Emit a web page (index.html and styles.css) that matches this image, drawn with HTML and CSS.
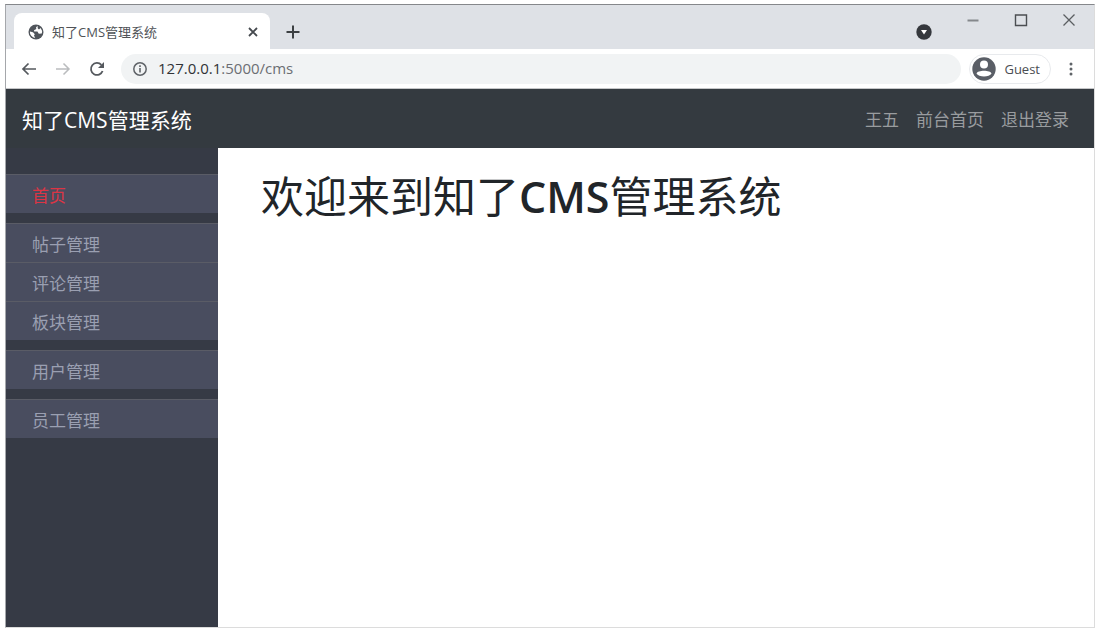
FILE: index.html
```html
<!DOCTYPE html>
<html lang="zh-CN">
<head>
<meta charset="utf-8">
<meta name="viewport" content="width=device-width, initial-scale=1">
<title>知了CMS管理系统</title>
<link rel="stylesheet" href="styles.css">
</head>
<body>
<div class="window">
  <div class="tabstrip">
    <div class="tab">
      <svg class="globe" viewBox="0 0 16 16" width="16" height="16" aria-hidden="true">
        <circle cx="8" cy="8" r="7.500" fill="#50555b"/>
        <path d="M9.500 1.800 8 3.400 8.300 5 6 6.200 6.200 7.600 9.400 7.600 10.800 9.800 13.800 9.600A6 6 0 0 0 12.600 4L11 5.600 9.800 4.600Z" fill="#fff"/>
        <path d="M1.900 7.400 5 8.200 6.800 10.200 6 11.400 7.200 13.900A6 6 0 0 1 1.900 7.400Z" fill="#fff"/>
      </svg>
      <span class="tab-title">知了CMS管理系统</span>
      <button class="icon-button" type="button" aria-label="关闭标签页">
        <svg viewBox="0 0 10 10" width="10" height="10"><path d="M1 1l8 8M9 1L1 9" stroke="#45494e" stroke-width="1.800"/></svg>
      </button>
    </div>
    <button class="icon-button new-tab" type="button" aria-label="新标签页">
      <svg viewBox="0 0 14 14" width="14" height="14"><path d="M7 0.500v13M0.500 7h13" stroke="#3c4043" stroke-width="2"/></svg>
    </button>
    <div class="window-controls">
      <button class="icon-button tab-search" type="button" aria-label="搜索标签页">
        <svg viewBox="0 0 16 16" width="16" height="16"><circle cx="8" cy="8" r="7.700" fill="#35383d"/><path d="M5 6h6l-3 4.500z" fill="#fff"/></svg>
      </button>
      <button class="icon-button" type="button" aria-label="最小化">
        <svg viewBox="0 0 14 14" width="14" height="14"><path d="M1.500 7.500h11" stroke="#85888c" stroke-width="2"/></svg>
      </button>
      <button class="icon-button" type="button" aria-label="最大化">
        <svg viewBox="0 0 14 14" width="14" height="14"><path d="M1.500 2h11v10.500h-11z" fill="none" stroke="#4b4e52" stroke-width="1.400"/></svg>
      </button>
      <button class="icon-button" type="button" aria-label="关闭">
        <svg viewBox="0 0 14 14" width="14" height="14"><path d="M1.500 1.500l11 11M12.500 1.500l-11 11" stroke="#5b5e62" stroke-width="1.300"/></svg>
      </button>
    </div>
  </div>

  <div class="toolbar">
    <button class="icon-button" type="button" aria-label="后退">
      <svg viewBox="0 0 16 16" width="16" height="16"><path d="M15 8H2M7.500 2.500 2 8l5.500 5.500" fill="none" stroke="#55595e" stroke-width="1.700"/></svg>
    </button>
    <button class="icon-button" type="button" aria-label="前进">
      <svg viewBox="0 0 16 16" width="16" height="16"><path d="M1 8h13M8.500 2.500 14 8l-5.500 5.500" fill="none" stroke="#babcbe" stroke-width="1.500"/></svg>
    </button>
    <button class="icon-button" type="button" aria-label="刷新">
      <svg viewBox="0 0 16 16" width="16" height="16"><path d="M13.600 10A6 6 0 1 1 12.400 3.900" fill="none" stroke="#55595e" stroke-width="1.800"/><path d="M15 1v6H9z" fill="#55595e"/></svg>
    </button>
    <div class="address">
      <svg viewBox="0 0 14 14" width="14" height="14" aria-hidden="true"><circle cx="7" cy="7" r="6.200" fill="none" stroke="#5f6368" stroke-width="1.500"/><path d="M7 6v4.500M7 3.300v1.600" stroke="#5f6368" stroke-width="1.600"/></svg>
      <span class="url"><span class="host">127.0.0.1</span>:5000/cms</span>
    </div>
    <button class="profile" type="button">
      <svg viewBox="0 0 24 24" width="24" height="24" aria-hidden="true"><circle cx="12" cy="12" r="11.700" fill="#5a5e66"/><circle cx="12" cy="7.500" r="4" fill="#fff"/><path d="M4.500 16.500C5.500 12.700 18.500 12.700 19.500 16.500 17.500 20.500 6.500 20.500 4.500 16.500Z" fill="#fff"/></svg>
      Guest
    </button>
    <button class="icon-button" type="button" aria-label="菜单">
      <svg viewBox="0 0 4 14" width="4" height="14"><g fill="#5f6368"><circle cx="2" cy="2" r="1.500"/><circle cx="2" cy="7" r="1.500"/><circle cx="2" cy="12" r="1.500"/></g></svg>
    </button>
  </div>

  <header class="navbar">
    <a class="brand" href="#">知了CMS管理系统</a>
    <nav class="nav-links">
      <a href="#">王五</a>
      <a href="#">前台首页</a>
      <a href="#">退出登录</a>
    </nav>
  </header>

  <div class="page">
    <nav class="sidebar">
      <ul class="menu-group">
        <li><a class="active" href="#">首页</a></li>
      </ul>
      <ul class="menu-group">
        <li><a href="#">帖子管理</a></li>
        <li><a href="#">评论管理</a></li>
        <li><a href="#">板块管理</a></li>
      </ul>
      <ul class="menu-group">
        <li><a href="#">用户管理</a></li>
      </ul>
      <ul class="menu-group">
        <li><a href="#">员工管理</a></li>
      </ul>
    </nav>
    <main class="content">
      <h1>欢迎来到知了<span class="latin">CMS</span>管理系统</h1>
    </main>
  </div>
</div>
</body>
</html>
```
FILE: styles.css
```css
* {
  box-sizing: border-box;
}

body {
  margin: 0;
  padding: 4px 5px 5px;
  min-height: 100vh;
  display: flex;
  background: #fff;
  font-family: "Open Sans", "Noto Sans CJK SC", sans-serif;
}

a {
  text-decoration: none;
}

svg {
  display: block;
  flex: none;
}

.window {
  flex: 1;
  display: flex;
  flex-direction: column;
  border: 1px solid #dcdcdc;
  border-top-color: #85878b;
  border-left-color: #a5a7ab;
}

.icon-button {
  display: flex;
  padding: 0;
  border: 0;
  background: none;
}

/* Browser tabs */
.tabstrip {
  display: flex;
  height: 44px;
  padding-left: 8px;
  background: #dee1e6;
}

.tab {
  display: flex;
  align-items: center;
  gap: 8px;
  width: 256px;
  margin-top: 8px;
  padding: 2px 12px 0 14px;
  border-radius: 8px 8px 0 0;
  background: #fff;
}

.tab-title {
  flex: 1;
  color: #505357;
  font-size: 13px;
  line-height: 20px;
}

.new-tab {
  margin: 20px 0 0 16px;
}

.window-controls {
  display: flex;
  align-items: flex-start;
  gap: 34px;
  margin-left: auto;
  padding: 8px 18px 0 0;
}

.tab-search {
  margin-top: 11px;
}

/* Address bar */
.toolbar {
  display: flex;
  align-items: center;
  gap: 18px;
  height: 40px;
  padding: 0 21px 0 15px;
  border-bottom: 1px solid #c5c6c8;
  background: #fff;
}

.address {
  flex: 1;
  display: flex;
  align-items: center;
  gap: 11px;
  height: 30px;
  margin-right: -10px;
  margin-left: -2px;
  padding-left: 12px;
  border-radius: 15px;
  background: #f1f3f4;
}

.url {
  padding-bottom: 2px;
  color: #6b6e73;
  font-size: 15px;
  line-height: 20px;
}

.host {
  color: #303236;
}

.profile {
  display: flex;
  align-items: center;
  gap: 8px;
  height: 30px;
  padding: 0 10px 0 2px;
  border: 1px solid #e8eaed;
  border-radius: 15px;
  background: #fff;
  color: #4a4d52;
  font: 13px/20px "Open Sans", sans-serif;
}

/* Site header */
.navbar {
  display: flex;
  align-items: center;
  justify-content: space-between;
  height: 59px;
  padding: 2px 25px 0 16px;
  background: #343a40;
}

.brand {
  color: #fff;
  font-size: 21px;
  line-height: 32px;
}

.nav-links {
  display: flex;
  gap: 17px;
}

.nav-links a {
  color: #999c9f;
  font-size: 17px;
  line-height: 24px;
}

/* Page body */
.page {
  flex: 1;
  display: flex;
}

.sidebar {
  display: flex;
  flex-direction: column;
  gap: 10px;
  width: 212px;
  padding-top: 26px;
  background: #363a45;
}

.menu-group {
  margin: 0;
  padding: 0;
  list-style: none;
}

.menu-group a {
  display: block;
  height: 39px;
  padding: 8px 26px 0;
  border-top: 1px solid #5a5c66;
  background: #494d5f;
  color: #9a9fb1;
  font-size: 17px;
  line-height: 26px;
}

.menu-group .active {
  color: #dc3545;
}

.content {
  flex: 1;
  padding: 21px 43px;
}

.content h1 {
  margin: 0;
  color: #212529;
  font-size: 43px;
  font-weight: 400;
  line-height: 56px;
}

.latin {
  font-weight: 600;
}
```
